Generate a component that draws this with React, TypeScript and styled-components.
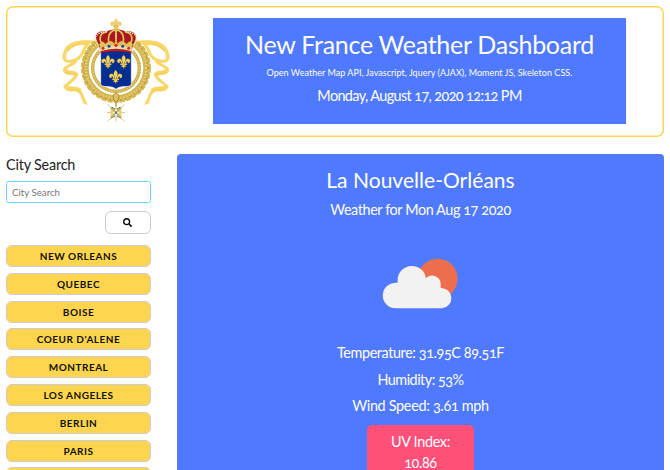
import React from 'react';
import styled, { createGlobalStyle } from 'styled-components';

const GlobalStyle = createGlobalStyle`
  *, *::before, *::after { box-sizing: border-box; }
  html, body { margin: 0; height: 470px; overflow: hidden; background: #fff; }
  body {
    color: #222;
    font-family: Lato, "Open Sans", sans-serif;
    font-variant-numeric: oldstyle-nums;
  }
`;

const Page = styled.div`
  height: 470px;
  overflow: hidden;
  padding: 6px 6px 0;
`;

const Header = styled.header`
  display: flex;
  align-items: flex-start;
  height: 131px;
  padding: 12px 38px 0 49px;
  border-radius: 7px;
  box-shadow: inset 0 0 0 1.4px #ffd54f;
`;

const EmblemSlot = styled.div`
  width: 158px;
  margin-top: -8px;
  flex: none;
`;

const Banner = styled.div`
  flex: 1;
  height: 106px;
  padding-top: 8px;
  background: #4f79ff;
  color: #fff;
  text-align: center;
`;

interface LineProps {
  $size: number;
  $height: number;
  $spacing?: number;
}

const Line = styled.div<LineProps>`
  font-size: ${(p) => p.$size}px;
  line-height: ${(p) => p.$height}px;
  letter-spacing: ${(p) => p.$spacing ?? 0}px;
  white-space: nowrap;
`;

const Columns = styled.div`
  display: flex;
  gap: 26px;
  margin-top: 17px;
`;

const Sidebar = styled.aside`
  display: flex;
  flex-direction: column;
  width: 145px;
  flex: none;
`;

const SearchInput = styled.input`
  width: 100%;
  height: 22px;
  margin-top: 5px;
  padding: 0 5px;
  border: 1px solid #6fdaf5;
  border-radius: 2.5px;
  outline: none;
  background: #fff;
  font-family: inherit;
  font-size: 9.7px;
  &::placeholder { color: #777; opacity: 1; }
`;

const SearchButton = styled.button`
  display: flex;
  align-items: center;
  justify-content: center;
  align-self: flex-end;
  width: 46px;
  height: 23px;
  margin-top: 8px;
  padding: 0 1px 0 0;
  border: 1px solid #ccc;
  border-radius: 6px;
  background: #fff;
`;

const CityList = styled.div`
  display: flex;
  flex-direction: column;
  gap: 5.8px;
  margin-top: 11px;
`;

const CityButton = styled.button`
  height: 22px;
  flex: none;
  padding: 0;
  border: 1px solid #ccc;
  border-radius: 6px;
  background: #ffd54f;
  color: #111;
  font-family: inherit;
  font-size: 10px;
  font-weight: 700;
  line-height: 20px;
  letter-spacing: 0.5px;
  text-align: center;
  text-transform: uppercase;
`;

const Panel = styled.main`
  display: flex;
  flex-direction: column;
  align-items: center;
  flex: 1;
  height: 316px;
  padding: 9px 0 0;
  border-radius: 4px 4px 0 0;
  background: #4f79ff;
  color: #fff;
`;

const Icon = styled.svg`
  display: block;
  flex: none;
`;

const WeatherSlot = styled.div`
  margin: 22px 1px 20px 0;
`;

const UvBadge = styled.div`
  width: 107px;
  height: 60px;
  flex: none;
  margin-top: 5px;
  padding-top: 6px;
  border-radius: 5px;
  background: #ff5079;
  text-align: center;
`;

const Fleur = ({ x, y, s = 1 }: { x: number; y: number; s?: number }) => (
  <g transform={`translate(${x} ${y}) scale(${s})`} fill="#f4d668" stroke="#b9912b" strokeWidth="1">
    <path d="M0-20C-7-12-7-7-3 2L-2 8H2L3 2C7-7 7-12 0-20Z" />
    <path d="M-3 5C-5-7-11-12-17-7C-22-2-18 6-12 4C-14 1-12-2-9 0L-5 8Z" />
    <path d="M3 5C5-7 11-12 17-7C22-2 18 6 12 4C14 1 12-2 9 0L5 8Z" />
    <path d="M-10 6H10V10H-10Z" />
    <path d="M-4 10L-7 16L-2 15L0 21L2 15L7 16L4 10Z" />
  </g>
);

const Ribbon = () => (
  <g fill="none" stroke="#f9d665" strokeLinecap="round" strokeLinejoin="round">
    <path d="M126 99C108 94 88 94 66 98C40 104 27 122 27 143C29 160 55 155 70 145C84 135 84 116 96 105" strokeWidth="9" />
    <path d="M98 99C73 96 50 103 38 116" strokeWidth="14" />
    <path d="M62 154C48 168 26 170 29 183C35 196 58 186 63 197C60 211 29 222 33 234C41 247 63 232 75 246C87 258 80 267 91 278" strokeWidth="9" />
    <path d="M30 178C35 192 55 184 64 193M31 229C42 242 60 229 73 240" strokeWidth="12" />
    <path d="M84 278L99 283" strokeWidth="3" />
    <path d="M34 143C32 123 47 108 69 103M35 187C45 193 57 188 63 195M39 237C54 241 67 234 76 247" stroke="#e5bd47" strokeWidth="1.3" />
  </g>
);

const Emblem = () => (
  <Icon width="120" height="120" viewBox="0 0 360 360" aria-label="Royal arms">
    <Ribbon />
    <g transform="translate(366 0) scale(-1 1)">
      <Ribbon />
    </g>
    <g fill="none">
      <circle cx="183" cy="174" r="92" stroke="#d2b450" strokeWidth="20" />
      <circle cx="183" cy="174" r="102" stroke="#d5b852" strokeWidth="6" strokeDasharray="14 5" />
      <circle cx="183" cy="174" r="91" stroke="#e8d174" strokeWidth="8" strokeDasharray="4 5" />
      <circle cx="183" cy="174" r="96" stroke="#a58b3b" strokeWidth="4" strokeDasharray="3 12" />
      <circle cx="183" cy="174" r="70" stroke="#cdaa46" strokeWidth="10" />
      <circle cx="183" cy="174" r="70" stroke="#e4ca70" strokeWidth="5" strokeDasharray="5 3" />
    </g>
    <path d="M132 105H234V126H132Z" fill="#fff" />
    <path d="M137 118H229V220C229 231 215 229 204 230C194 231 188 233 183 238C178 233 171 231 162 230C151 229 137 231 137 220Z" fill="#052d92" stroke="#fff" strokeWidth="2" />
    <Fleur x={159} y={155} />
    <Fleur x={206} y={155} />
    <Fleur x={182} y={200} />
    <path d="M136 120L126 91C113 70 137 60 154 65C168 55 198 55 212 65C230 59 252 72 239 92L230 120C205 112 161 112 136 120Z" fill="#a9181d" />
    <g fill="none" stroke="#e6c65b" strokeWidth="5">
      <path d="M147 109C126 87 136 68 155 66" />
      <path d="M165 107C154 81 164 64 181 59" />
      <path d="M201 107C212 81 202 64 184 59" />
      <path d="M219 109C240 87 230 68 211 66" />
      <path d="M183 58V105" />
    </g>
    <g fill="none" stroke="#f4ecd5" strokeWidth="5" strokeLinecap="round" strokeDasharray="0 7">
      <path d="M130 105C111 84 124 67 154 65" />
      <path d="M236 105C255 84 242 67 212 65" />
      <path d="M183 57V98" strokeWidth="4" />
    </g>
    <path d="M128 106C106 83 124 61 154 63M238 106C260 83 242 61 212 63" fill="none" stroke="#c8ad72" strokeWidth="1" strokeDasharray="3 3" />
    <g fill="#e5c057" stroke="#b58c28" strokeWidth="1">
      <path d="M133 102Q142 87 151 102Q167 84 178 101L183 88L188 101Q199 84 215 102Q224 87 233 102L230 116Q183 103 136 116Z" />
      <path d="M134 112Q183 98 232 112L230 125Q183 111 136 125Z" fill="#efdc9e" />
    </g>
    <circle cx="144" cy="115" r="4.500" fill="#dd2730" />
    <circle cx="162" cy="109" r="4.500" fill="#174bb0" />
    <circle cx="183" cy="106" r="5" fill="#dd2730" />
    <circle cx="203" cy="109" r="4.500" fill="#174bb0" />
    <circle cx="221" cy="115" r="4.500" fill="#dd2730" />
    <path d="M137 124Q183 109 229 124V129Q183 119 137 129Z" fill="#b51c22" />
    <Fleur x={183} y={43} s={0.85} />
    <circle cx="183" cy="59" r="6" fill="#e5c057" />
    <path d="M174 255L183 248L192 255L190 269L183 276L176 269Z" fill="#e0c360" stroke="#94772d" strokeWidth="2" />
    <path d="M183 275V290" stroke="#c6a546" strokeWidth="5" />
    <g stroke="#d9c385" strokeWidth="3" strokeLinecap="round">
      <path d="M183 284V333M157 308H209M158 284L208 333M208 284L158 333" />
    </g>
    <path d="M170 291L183 298L196 291L191 308L198 324L183 318L168 324L175 308Z" fill="#b5b47a" stroke="#687253" strokeWidth="2" />
    <path d="M167 296L176 299V317L167 321M199 296L190 299V317L199 321" fill="#e9cf66" stroke="#c6a43c" strokeWidth="2" />
    <path d="M183 296V320M173 308H193" stroke="#f5f7ed" strokeWidth="5" />
    <circle cx="183" cy="308" r="4" fill="#648064" />
  </Icon>
);

const WeatherIcon = () => (
  <Icon width="100" height="75" viewBox="0 0 300 225" aria-label="Partly cloudy">
    <circle cx="203" cy="101" r="60" fill="#ec6e4c" />
    <path
      d="M77 190A38.500 38.500 0 1 1 83 113.500V103A42.500 42.500 0 0 1 167.500 99A26.500 26.500 0 0 1 212 121V129A30.500 30.500 0 1 1 215 190Z"
      fill="#f2f2f2"
    />
  </Icon>
);

const SearchIcon = () => (
  <Icon width="9" height="9" viewBox="0 0 512 512" fill="#000">
    <path d="M505 442.700L405.300 343c-4.500-4.500-10.600-7-17-7H372c27.600-35.300 44-79.700 44-128C416 93.100 322.900 0 208 0S0 93.100 0 208s93.100 208 208 208c48.300 0 92.700-16.400 128-44v16.300c0 6.400 2.500 12.500 7 17l99.700 99.700c9.400 9.400 24.600 9.400 33.900 0l28.300-28.300c9.400-9.400 9.400-24.600.1-34zM208 336c-70.700 0-128-57.200-128-128 0-70.700 57.200-128 128-128 70.700 0 128 57.200 128 128 0 70.700-57.200 128-128 128z" />
  </Icon>
);

const cities = ['New Orleans', 'Quebec', 'Boise', "Coeur d'Alene", 'Montreal', 'Los Angeles', 'Berlin', 'Paris', ''];

export default function App() {
  return (
    <>
      <GlobalStyle />
      <Page>
        <Header>
          <EmblemSlot>
            <Emblem />
          </EmblemSlot>
          <Banner>
            <Line $size={25} $height={37} $spacing={-0.28}>New France Weather Dashboard</Line>
            <Line $size={9} $height={19} $spacing={0.03}>
              Open Weather Map API, Javascript, Jquery (AJAX), Moment JS, Skeleton CSS.
            </Line>
            <Line $size={14.4} $height={28} $spacing={-0.6}>Monday, August 17, 2020 12:12 PM</Line>
          </Banner>
        </Header>
        <Columns>
          <Sidebar>
            <Line $size={14.4} $height={22} $spacing={-0.2}>City Search</Line>
            <SearchInput placeholder="City Search" />
            <SearchButton aria-label="Search">
              <SearchIcon />
            </SearchButton>
            <CityList>
              {cities.map((city) => (
                <CityButton key={city}>{city}</CityButton>
              ))}
            </CityList>
          </Sidebar>
          <Panel>
            <Line $size={21} $height={33} $spacing={0.03}>La Nouvelle-Orléans</Line>
            <Line $size={14.4} $height={27} $spacing={-0.4}>Weather for Mon Aug 17 2020</Line>
            <WeatherSlot>
              <WeatherIcon />
            </WeatherSlot>
            <Line $size={14.4} $height={26.7} $spacing={-0.4}>Temperature: 31.95C 89.51F</Line>
            <Line $size={14.4} $height={26.7} $spacing={-0.5}>Humidity: 53%</Line>
            <Line $size={14.4} $height={26.7} $spacing={-0.3}>Wind Speed: 3.61 mph</Line>
            <UvBadge>
              <Line $size={14.4} $height={21} $spacing={-0.3}>UV Index:</Line>
              <Line $size={14.4} $height={21} $spacing={-0.4}>10.86</Line>
            </UvBadge>
          </Panel>
        </Columns>
      </Page>
    </>
  );
}
